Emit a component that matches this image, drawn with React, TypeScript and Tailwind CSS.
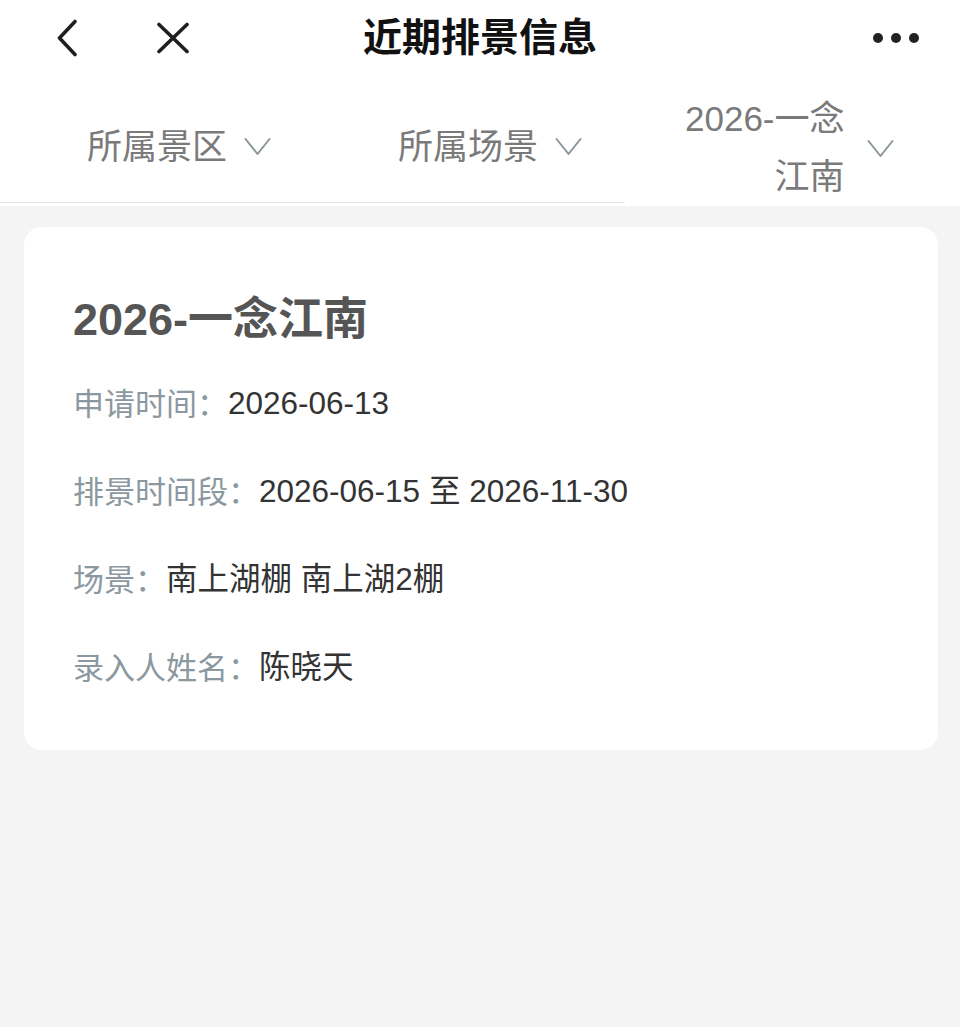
import React from "react";

const FONT = { fontFamily: '"Liberation Sans", "Noto Sans CJK SC", sans-serif' };

function Chevron() {
  return (
    <svg width="27" height="19" viewBox="0 0 27 19" className="shrink-0">
      <path d="M1.5 2 L13.5 17 L25.5 2" fill="none" stroke="#8a969b" strokeWidth="2" strokeLinecap="round" strokeLinejoin="round" />
    </svg>
  );
}

function Row({ label, value }: { label: string; value: string }) {
  return (
    <div className="h-[88px] flex items-center leading-none">
      <span className="text-[31px] text-[#8b989f]">{label}</span>
      <span className="text-[31.5px] text-[#333333]">{value}</span>
    </div>
  );
}

export default function App() {
  return (
    <div className="min-h-screen w-full bg-[#f4f4f4]" style={FONT}>
      {/* nav bar */}
      <div className="h-[75px] bg-white grid grid-cols-[1fr_auto_1fr] items-center">
        <div className="flex items-center pl-[56px]">
          <svg width="22" height="38" viewBox="0 0 22 38">
            <path d="M19 2.5 L3.5 19 L19 35.5" fill="none" stroke="#1f1f1f" strokeWidth="3.6" strokeLinecap="round" strokeLinejoin="round" />
          </svg>
          <svg width="34" height="32" viewBox="0 0 34 32" className="ml-[78px]">
            <path d="M3 2.5 L31 29.5 M31 2.5 L3 29.5" fill="none" stroke="#1f1f1f" strokeWidth="3.6" strokeLinecap="round" />
          </svg>
        </div>
        <div className="text-[39px] font-bold text-[#111111] leading-none">近期排景信息</div>
        <div className="flex items-center justify-end pr-[41px] gap-[8px]">
          <span className="w-[10px] h-[10px] rounded-full bg-[#222222]" />
          <span className="w-[10px] h-[10px] rounded-full bg-[#222222]" />
          <span className="w-[10px] h-[10px] rounded-full bg-[#222222]" />
        </div>
      </div>

      {/* filter bar */}
      <div className="h-[131px] bg-white flex items-stretch text-[35px] text-[#7a7a7a]">
        <div className="w-[625px] h-[128px] border-b border-[#e6e6e6] flex items-center pl-[87px] pt-[15px]">
          <div className="flex items-center gap-[17px]">
            <span className="leading-none">所属景区</span>
            <Chevron />
          </div>
          <div className="flex items-center gap-[17px] ml-[127px]">
            <span className="leading-none">所属场景</span>
            <Chevron />
          </div>
        </div>
        <div className="flex items-center pl-[60px] gap-[22px] pt-[15px]">
          <div className="text-right leading-[58px]">
            <div>2026-一念</div>
            <div>江南</div>
          </div>
          <Chevron />
        </div>
      </div>

      {/* card */}
      <div className="mt-[21px] ml-[24px] w-[914px] bg-white rounded-[18px] pl-[49px] pt-[68px] pb-[38px]">
        <div className="text-[45px] font-bold text-[#555555] leading-[50px]">2026-一念江南</div>
        <div className="mt-[15px]">
          <Row label="申请时间：" value="2026-06-13" />
          <Row label="排景时间段：" value="2026-06-15 至 2026-11-30" />
          <Row label="场景：" value="南上湖棚 南上湖2棚" />
          <Row label="录入人姓名：" value="陈晓天" />
        </div>
      </div>
    </div>
  );
}
